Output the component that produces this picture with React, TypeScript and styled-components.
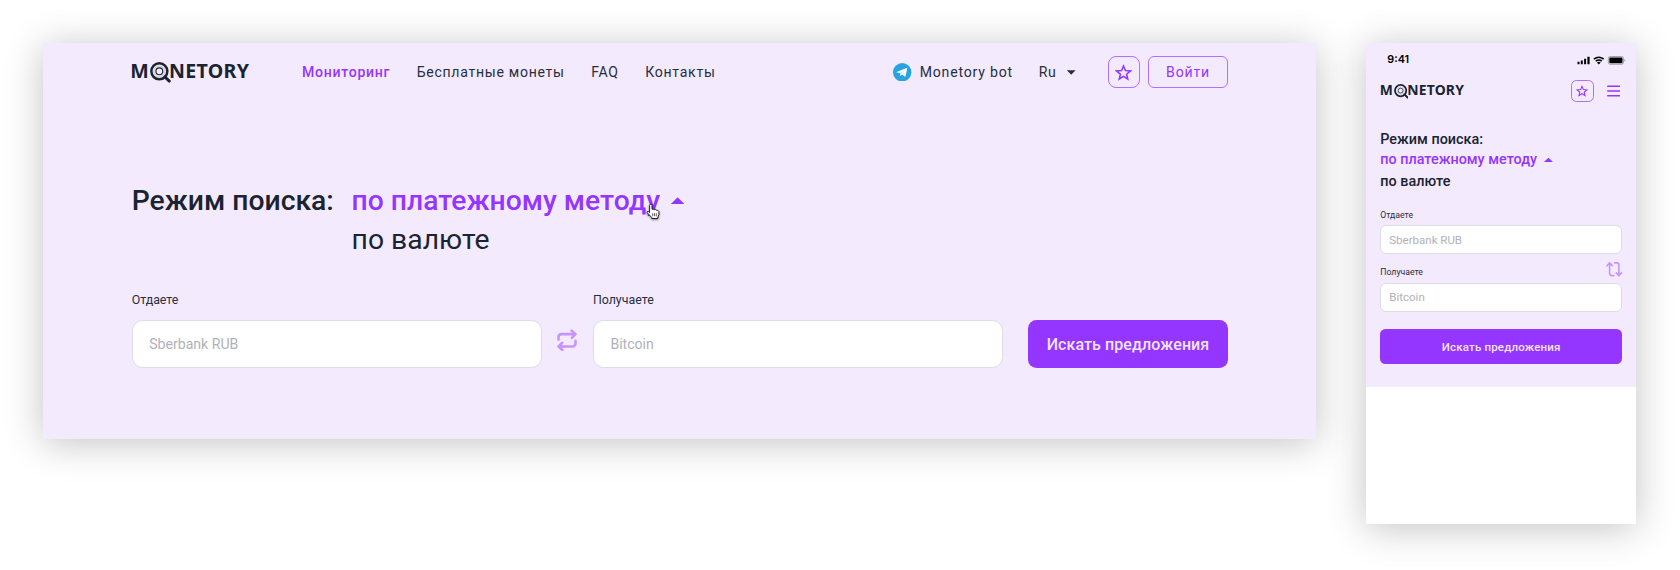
import React from "react";
import styled, { createGlobalStyle, css } from "styled-components";

const ink = "#1a2430";
const softInk = "#272f3e";
const violet = "#9436ff";
const lilac = "#f4eafe";

const GlobalStyle = createGlobalStyle`
  *, *::before, *::after { box-sizing: border-box; }
  body { margin: 0; background: #fff; overflow: hidden; font-family: Roboto, "Noto Sans", sans-serif; color: ${ink}; }
  button, input { font-family: inherit; margin: 0; }
`;

const Stage = styled.main`
  display: flex;
  align-items: flex-start;
  gap: 50px;
  width: 1680px;
  height: 570px;
  padding: 43.3px;
`;

const shadow = css`
  box-shadow: 0 3.5px 36px rgba(0, 0, 0, 0.24);
`;

const Desktop = styled.section`
  ${shadow}
  flex: none;
  width: 1272.7px;
  height: 395.7px;
  padding: 12.7px 88.4px 0;
  background: ${lilac};
`;

const Phone = styled.section`
  ${shadow}
  flex: none;
  width: 270.4px;
  height: 481px;
  background: #fff;
`;

const Header = styled.header`
  display: flex;
  align-items: center;
  height: 32.5px;
`;

const LogoRow = styled.div<{ $size: number }>`
  display: flex;
  align-items: center;
  flex: none;
  margin: 0 0 0.13em -0.07em;
  font: 700 ${(p) => p.$size}px/1 "Noto Sans", "Open Sans", sans-serif;
  letter-spacing: 0.015em;
  svg { flex: none; width: 1.06em; height: 1.06em; margin: 0.13em -0.087em 0 0.046em; }
`;

const Logo = ({ size }: { size: number }) => (
  <LogoRow $size={size}>
    <span>M</span>
    <svg viewBox="0 0 20 20" fill="none" stroke={ink}>
      <circle cx="9" cy="9" r="7.7" strokeWidth="2.4" />
      <circle cx="9" cy="9" r="3.3" strokeWidth="1.1" />
      <circle cx="9" cy="9" r="5.2" strokeWidth=".6" opacity=".3" />
      <path d="M14.3 14.3 18.6 18.4" strokeWidth="2.8" strokeLinecap="round" />
    </svg>
    <span>NETORY</span>
  </LogoRow>
);

const Nav = styled.nav`
  display: flex;
  gap: 26.5px;
  margin-left: 52.8px;
`;

const NavLink = styled.a<{ $active?: boolean }>`
  font-size: 14.1px;
  line-height: 20px;
  letter-spacing: 0.7px;
  white-space: nowrap;
  font-weight: ${(p) => (p.$active ? 500 : 400)};
  color: ${(p) => (p.$active ? violet : softInk)};
`;

const Tools = styled.div`
  display: flex;
  align-items: center;
  margin-left: auto;
  color: ${softInk};
`;

const BotLink = styled.a`
  display: flex;
  align-items: center;
  gap: 8px;
  font-size: 14.1px;
  line-height: 20px;
  letter-spacing: 0.8px;
`;

const Language = styled.div`
  display: flex;
  align-items: center;
  gap: 10.7px;
  margin: 0.4px 32px 0 25.8px;
  font-size: 14.1px;
  line-height: 20px;
  letter-spacing: 0.44px;
`;

const StarBox = styled.button<{ $size: number; $icon: number; $radius: number }>`
  display: grid;
  place-items: center;
  width: ${(p) => p.$size}px;
  height: ${(p) => p.$size}px;
  padding: 0;
  border: 1px solid #b06ffd;
  border-radius: ${(p) => p.$radius}px;
  background: transparent;
  svg { width: ${(p) => p.$icon}px; height: ${(p) => p.$icon}px; }
`;

const Star = () => (
  <svg viewBox="0 0 24 24" fill="none" stroke={violet} strokeWidth="2.2">
    <path d="M12 2.8 14.7 9.2 21.8 9.8 16.4 14.4 18 21.2 12 17.5 6 21.2 7.6 14.4 2.2 9.8 9.3 9.2Z" />
  </svg>
);

const Login = styled.button`
  width: 79.2px;
  height: 32.5px;
  margin-left: 8.3px;
  padding: 0;
  border: 1px solid #b06ffd;
  border-radius: 6px;
  background: transparent;
  color: ${violet};
  font-size: 14.1px;
  letter-spacing: 0.8px;
`;

const Caret = styled.i<{ $up?: boolean; $w: number; $h: number }>`
  flex: none;
  width: ${(p) => p.$w}px;
  height: ${(p) => p.$h}px;
  background: currentColor;
  clip-path: ${(p) => (p.$up ? "polygon(50% 0, 100% 100%, 0 100%)" : "polygon(0 0, 100% 0, 50% 100%)")};
`;

const Mode = styled.div`
  display: flex;
  gap: 17.8px;
  margin-top: 92.6px;
  font-size: 28.3px;
  line-height: 39px;
  white-space: nowrap;
`;

const ModeTitle = styled.h1`
  margin: 0;
  font: inherit;
  font-weight: 500;
`;

const ModeChoice = styled.div`
  position: relative;
  display: flex;
  align-items: center;
  gap: 10.8px;
  color: ${violet};
  font-weight: 500;
`;

const ModeOption = styled.div``;

const Hand = styled.svg`
  position: absolute;
  left: 293.4px;
  top: 21.6px;
  width: 16px;
  height: 17px;
  overflow: visible;
  filter: drop-shadow(0 1px 0.8px rgba(0, 0, 0, 0.45));
`;

const Form = styled.form`
  display: flex;
  align-items: flex-end;
  margin-top: 32.2px;
`;

const Field = styled.label`
  display: flex;
  flex-direction: column;
  gap: 12.2px;
  width: 410px;
  color: ${softInk};
  font-size: 12.4px;
  line-height: 17px;
`;

const TextInput = styled.input`
  width: 100%;
  height: 48px;
  padding: 0 16.5px;
  border: 1px solid #dddce2;
  border-radius: 10.5px;
  background: #fff;
  font-size: 14.1px;
  outline: none;
  &::placeholder { color: #b0b2b8; opacity: 1; }
`;

const SwapSlot = styled.div`
  width: 51.2px;
  height: 48px;
  display: flex;
  justify-content: center;
  padding-top: 8.4px;
  svg { width: 22px; height: 22.6px; }
`;

const SwapIcon = ({ thin }: { thin?: boolean }) => (
  <svg viewBox="0 0 22 22" fill="none" stroke="#c594ff" strokeWidth={thin ? 2.1 : 2.6} strokeLinecap="round" strokeLinejoin="round">
    <path d="M2.5 10.3V7.8a3 3 0 0 1 3-3H19.2M15.6 1.3 19.5 4.8 15.9 8.5" />
    <path d="M19.5 11.5v2.7a3 3 0 0 1-3 3H2.8M6.4 20.7 2.5 17.2 6.1 13.5" />
  </svg>
);

const Submit = styled.button`
  width: 199.2px;
  height: 48.4px;
  margin-left: auto;
  padding: 0;
  border: 0;
  border-radius: 8.5px;
  background: ${violet};
  color: #f2e4ff;
  font-size: 16px;
  font-weight: 500;
  letter-spacing: 0.09px;
`;

const PhoneTop = styled.div`
  height: 343.4px;
  padding: 0 14.3px;
  background: ${lilac};
`;

const StatusBar = styled.div`
  display: flex;
  align-items: center;
  justify-content: space-between;
  height: 33px;
  padding: 1.4px 0 0 7px;
  margin-right: -3.5px;
  font: 600 10.8px/14px Inter, sans-serif;
  color: #000;
`;

const PhoneHeader = styled.div`
  display: flex;
  align-items: center;
  height: 30px;
  ${LogoRow} { margin-bottom: 2px; margin-left: -0.5px; }
  ${StarBox} { margin-left: auto; }
`;

const Burger = styled.svg`
  width: 13.4px;
  height: 12px;
  margin: 0 1.8px 0 13.3px;
`;

const PhoneMode = styled.div`
  margin-top: 24px;
  font-size: 14.4px;
  font-weight: 500;
  line-height: 19.7px;
  white-space: nowrap;
  ${ModeChoice} { gap: 6.8px; }
  ${ModeOption} { padding-top: 2.3px; }
`;

const PhoneForm = styled.form`
  display: flex;
  flex-direction: column;
  margin-top: 17.2px;
  ${Field} { width: 100%; font-size: 8.7px; line-height: 12px; gap: 4.6px; }
  ${TextInput} { height: 29px; padding: 0 8px; border-radius: 6px; font-size: 11.5px; }
  ${Submit} { width: 100%; height: 34.6px; margin: 17.6px 0 0; border-radius: 5.5px; font-size: 11.5px; letter-spacing: 0.18px; }
`;

const PhoneSwap = styled.div`
  display: flex;
  justify-content: flex-end;
  height: 16px;
  margin: 6.4px -0.7px -10.6px 0;
  svg { width: 16.5px; height: 16.5px; transform: rotate(-90deg); }
`;

export default function App() {
  return (
    <>
      <GlobalStyle />
      <Stage>
        <Desktop>
          <Header>
            <Logo size={19.6} />
            <Nav>
              <NavLink $active>Мониторинг</NavLink>
              <NavLink>Бесплатные монеты</NavLink>
              <NavLink>FAQ</NavLink>
              <NavLink>Контакты</NavLink>
            </Nav>
            <Tools>
              <BotLink>
                <svg width="18.4" height="18.4" viewBox="0 0 24 24">
                  <circle cx="12" cy="12" r="12" fill="#27a3e2" />
                  <path d="M4.8 11.8 17.6 6.6Q18.6 6.3 18.4 7.4L16.5 17Q16.2 18.2 15.2 17.5L11.9 15.1 10.3 16.7Q9.8 17.1 9.7 16.3L9.1 13.2 5 12.5Q4.2 12.2 4.8 11.8Z" fill="#fff" />
                  <path d="M9.1 13.2 15.6 8.9 10.7 13.9 10 16.4Z" fill="#b9dff3" />
                </svg>
                Monetory bot
              </BotLink>
              <Language>Ru<Caret $w={8.8} $h={4.5} /></Language>
              <StarBox $size={32.5} $icon={17} $radius={8}><Star /></StarBox>
              <Login>Войти</Login>
            </Tools>
          </Header>
          <Mode>
            <ModeTitle>Режим поиска:</ModeTitle>
            <div>
              <ModeChoice>
                по платежному методу
                <Caret $up $w={13.5} $h={6.8} />
                <Hand viewBox="0 0 16 17">
                  <path d="M4.6 9.6V2.4a1.2 1.2 0 0 1 2.4 0V6.2Q8.4 5.6 9.1 6.7 10.5 6 11.3 7.2 13 6.7 13.9 8.5 14.4 12 12.9 14V15.5H6.8V14.5Q4.3 12 2.2 9.8 1.6 8.4 2.9 8.3 3.8 8.5 4.6 9.6Z" fill="#fff" stroke="#222" strokeWidth="1" strokeLinejoin="round" />
                  <path d="M7.7 10.2v3M9.5 10.2v3M11.3 10.2v3" stroke="#333" strokeWidth=".8" />
                </Hand>
              </ModeChoice>
              <ModeOption>по валюте</ModeOption>
            </div>
          </Mode>
          <Form>
            <Field>Отдаете<TextInput placeholder="Sberbank RUB" /></Field>
            <SwapSlot><SwapIcon /></SwapSlot>
            <Field>Получаете<TextInput placeholder="Bitcoin" /></Field>
            <Submit type="button">Искать предложения</Submit>
          </Form>
        </Desktop>
        <Phone>
          <PhoneTop>
            <StatusBar>
              9:41
              <svg width="49" height="9" viewBox="0 0 49 9">
                <path d="M.5 5.7h2v2.6h-2zM3.8 4.5h2v3.8h-2zM7.1 2.7h2v5.6h-2zM10.4.7h2.2v7.6h-2.2z" fill="#000" />
                <path d="M16.9 3.2q4.9-4 9.8 0M18.8 5.2q3-2.4 6 0" fill="none" stroke="#000" strokeWidth="1.5" />
                <path d="M19.9 6.5q1.9-1.4 3.8 0L21.8 8.5Z" fill="#000" />
                <rect x="31.3" y=".5" width="15.2" height="7.8" rx="2" fill="none" stroke="#000" strokeOpacity=".4" strokeWidth=".8" />
                <rect x="32.3" y="1.5" width="13.2" height="5.8" rx="1.2" fill="#000" />
                <path d="M47.4 3v2.6q1-.4 1-1.3t-1-1.3" fill="#000" fillOpacity=".4" />
              </svg>
            </StatusBar>
            <PhoneHeader>
              <Logo size={13.9} />
              <StarBox $size={22.4} $icon={12} $radius={5.5}><Star /></StarBox>
              <Burger viewBox="0 0 13.4 12" stroke={violet} strokeWidth="1.4" strokeLinecap="round">
                <path d="M.7 1.2h12M.7 6h12M.7 10.8h12" />
              </Burger>
            </PhoneHeader>
            <PhoneMode>
              <div>Режим поиска:</div>
              <ModeChoice>по платежному методу<Caret $up $w={9} $h={4.4} /></ModeChoice>
              <ModeOption>по валюте</ModeOption>
            </PhoneMode>
            <PhoneForm>
              <Field>Отдаете<TextInput placeholder="Sberbank RUB" /></Field>
              <PhoneSwap><SwapIcon thin /></PhoneSwap>
              <Field>Получаете<TextInput placeholder="Bitcoin" /></Field>
              <Submit type="button">Искать предложения</Submit>
            </PhoneForm>
          </PhoneTop>
        </Phone>
      </Stage>
    </>
  );
}
